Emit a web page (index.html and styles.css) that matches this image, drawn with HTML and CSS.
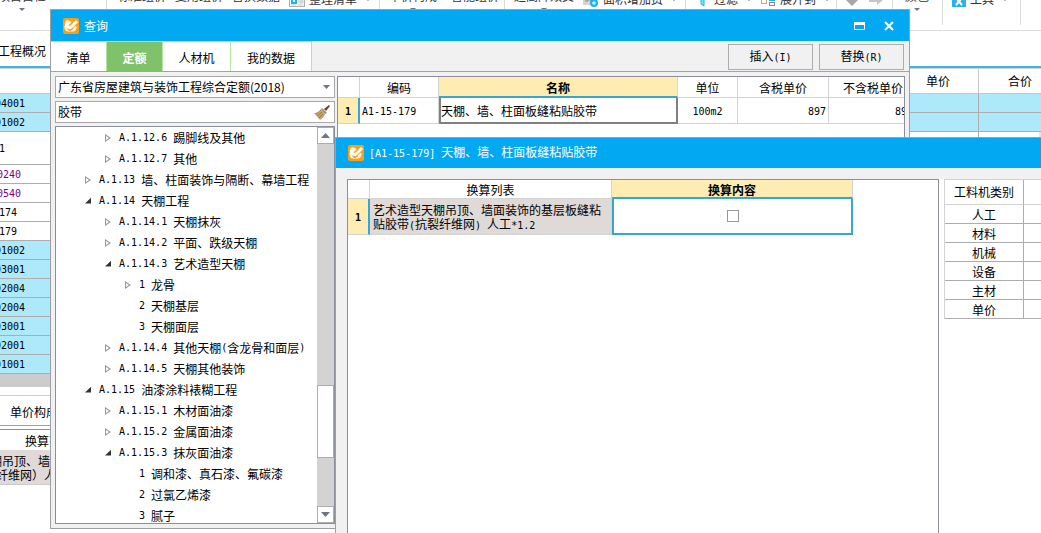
FILE: index.html
```html
<!DOCTYPE html>
<html lang="zh-CN">
<head>
<meta charset="utf-8">
<title>查询</title>
<link rel="stylesheet" href="styles.css">
</head>
<body>
<div class="desktop">
  <main class="app">
    <div class="toolbar">
      <div class="group g-project"><div class="big"><span>项目自检</span><i class="caret"></i></div></div>
      <div class="group g-pricing"><span class="cut">标准组价</span><span class="cut">复用组价</span><span class="cut">替换数据</span>
        <span class="tool"><svg width="16" height="16" viewBox="0 0 16 16"><rect x=".5" y=".5" width="15" height="15" fill="#f4f4f4" stroke="#b0b0b0"/><rect x="3" y="8" width="4" height="4" fill="#fff" stroke="#1cb4ea" stroke-width="2"/><path d="M10 7h4v5h-4zM2 14h5M9 14h5" fill="#d8d8d8" stroke="#d8d8d8"/></svg>整理清单<i class="caret"></i></span></div>
      <div class="group g-build"><div class="big"><span>单价构成</span><i class="caret"></i></div><span class="cut">智能组价</span></div>
      <div class="group g-area"><div class="big"><span>超高降效费</span><i class="caret"></i></div>
        <span class="tool"><svg width="16" height="16" viewBox="0 0 16 16"><rect width="12" height="14" fill="#d4d4d4"/><path d="M2 10h3l1-3 2 4h3" stroke="#888" fill="none"/><circle cx="11" cy="12" r="4" fill="#1cb4ea"/><path d="M9 12h4M11 10v4" stroke="#fff"/></svg>面积增加费<i class="caret"></i></span></div>
      <div class="group g-view"><span class="tool"><svg width="16" height="16" viewBox="0 0 16 16"><path d="M3 0h10l-3 7v8l-3-2V7z" fill="#7fe0fa" stroke="#1cb4ea"/></svg>过滤<i class="caret"></i></span>
        <span class="tool"><svg width="16" height="16" viewBox="0 0 16 16"><rect x="1.500" y="8.500" width="5" height="4" fill="#fff" stroke="#c4a78b"/><rect x="9.500" y="6.500" width="5" height="3" fill="#fff" stroke="#1cb4ea"/><rect x="9.500" y="11.500" width="5" height="3" fill="#fff" stroke="#888"/></svg>展开到<i class="caret"></i></span></div>
      <div class="group g-move"><span class="tool"><svg width="14" height="16" viewBox="0 0 14 16"><path d="M4 0h6v8h4l-7 7-7-7h4z" fill="#a6a6a6"/></svg></span><span class="tool"><svg width="14" height="16" viewBox="0 0 14 16"><path d="M0 7h8V3l6 6-6 5V11H0z" fill="#c6c6c6"/></svg></span></div>
      <div class="group g-color"><div class="big"><span>颜色</span><i class="caret"></i></div></div>
      <div class="group g-tools"><span class="tool"><svg width="14" height="16" viewBox="0 0 14 16"><rect width="14" height="16" fill="#2bb3e8"/><path d="M4 7l6 7M10 7l-6 7" stroke="#fff" stroke-width="2"/></svg>工具<i class="caret"></i></span></div>
    </div>
    <nav class="pages"><a href="#">工程概况</a></nav>
    <table class="bill">
      <colgroup><col class="c-code"><col><col class="c-price"><col class="c-total"><col class="c-scroll"></colgroup>
      <thead><tr><th></th><th></th><th>单价</th><th>合价</th><th></th></tr></thead>
      <tbody>
        <tr class="blue"><td>04001</td><td></td><td></td><td></td><td></td></tr>
        <tr class="blue"><td>01002</td><td></td><td></td><td></td><td></td></tr>
        <tr class="tall"><td>1</td><td></td><td></td><td></td><td></td></tr>
        <tr class="purple"><td>0240</td><td></td><td></td><td></td><td></td></tr>
        <tr class="purple"><td>0540</td><td></td><td></td><td></td><td></td></tr>
        <tr class="sub"><td>174</td><td></td><td></td><td></td><td></td></tr>
        <tr class="sub"><td>179</td><td></td><td></td><td></td><td></td></tr>
        <tr class="blue"><td>01002</td><td></td><td></td><td></td><td></td></tr>
        <tr class="blue"><td>03001</td><td></td><td></td><td></td><td></td></tr>
        <tr class="blue"><td>02004</td><td></td><td></td><td></td><td></td></tr>
        <tr class="blue"><td>02004</td><td></td><td></td><td></td><td></td></tr>
        <tr class="blue"><td>03001</td><td></td><td></td><td></td><td></td></tr>
        <tr class="blue"><td>02001</td><td></td><td></td><td></td><td></td></tr>
        <tr class="blue"><td>01001</td><td></td><td></td><td></td><td></td></tr>
      </tbody>
    </table>
    <div class="hscroll"></div>
    <nav class="detail-tabs"><a href="#">单价构成</a></nav>
    <div class="detail-head">换算列表</div>
    <div class="detail-row"><p class="first">棚吊顶、墙面装饰</p><p class="second">纤维网）人工*1.2</p></div>
  </main>

  <section class="window query">
    <header class="titlebar">
      <svg class="logo" viewBox="0 0 16 16"><rect width="16" height="16" rx="2" fill="#f9a01b"/><path d="M7 3L4 2 2 4l1 2-2 3 2 4 4 1 5-1 2-4" fill="#fff3dc"/><path d="M5 8l2 2 6-7" fill="none" stroke="#f9a01b" stroke-width="5"/><path d="M3 5l1 3 3 2 7-7" fill="none" stroke="#fff" stroke-width="3"/><path d="M5 12l5-1" stroke="#f9a01b"/></svg>
      <h1>查询</h1>
      <div class="controls">
        <button aria-label="最大化"><svg width="12" height="10" viewBox="0 0 12 10"><path d="M.5 1.500h10v7H.5z" fill="none" stroke="#fff"/><path d="M0 1h11v3H0z" fill="#fff"/></svg></button>
        <button aria-label="关闭"><svg width="12" height="10" viewBox="0 0 12 10"><path d="M2 1l8 8M10 1L2 9" stroke="#fff" stroke-width="2"/></svg></button>
      </div>
    </header>
    <div class="tabbar">
      <button class="tab">清单</button><button class="tab active">定额</button><button class="tab wide">人材机</button><button class="tab wider">我的数据</button>
      <div class="actions"><button class="btn">插入<span class="n">(I)</span></button><button class="btn">替换<span class="n">(R)</span></button></div>
    </div>
    <div class="query-body">
      <aside class="side">
        <div class="field">
          <select aria-label="定额库"><option>广东省房屋建筑与装饰工程综合定额(2018)</option></select>
          <svg class="drop" width="7" height="4" viewBox="0 0 7 4"><path d="M0 0h7L3.500 4z" fill="#6d7585"/></svg>
        </div>
        <div class="field">
          <input type="text" aria-label="搜索" value="胶带">
          <button class="broom" aria-label="清除"><svg width="16" height="15" viewBox="0 0 16 15"><path d="M10 4l5-4 1 1-4 5z" fill="#7a3d1c"/><path d="M8 3l5 5-2 1-4-5z" fill="#8b8f94"/><path d="M7 4l4 5c-1 3-3 5-5 6L0 8c3 0 6-1 7-4z" fill="#c9a468"/><path d="M8 7l-5 4M9 9l-4 4M7 5L2 9" stroke="#8f6a35" stroke-width=".7"/></svg></button>
        </div>
        <div class="tree-box">
          <ul class="tree">
            <li class="l2 closed"><span class="n">A.1.12.6 </span>踢脚线及其他</li>
            <li class="l2 closed"><span class="n">A.1.12.7 </span>其他</li>
            <li class="l1 closed"><span class="n">A.1.13 </span>墙、柱面装饰与隔断、幕墙工程</li>
            <li class="l1 open"><span class="n">A.1.14 </span>天棚工程</li>
            <li class="l2 closed"><span class="n">A.1.14.1 </span>天棚抹灰</li>
            <li class="l2 closed"><span class="n">A.1.14.2 </span>平面、跌级天棚</li>
            <li class="l2 open"><span class="n">A.1.14.3 </span>艺术造型天棚</li>
            <li class="l3 closed"><span class="n">1 </span>龙骨</li>
            <li class="l3"><span class="n">2 </span>天棚基层</li>
            <li class="l3"><span class="n">3 </span>天棚面层</li>
            <li class="l2 closed"><span class="n">A.1.14.4 </span>其他天棚<span class="n">(</span>含龙骨和面层<span class="n">)</span></li>
            <li class="l2 closed"><span class="n">A.1.14.5 </span>天棚其他装饰</li>
            <li class="l1 open"><span class="n">A.1.15 </span>油漆涂料裱糊工程</li>
            <li class="l2 closed"><span class="n">A.1.15.1 </span>木材面油漆</li>
            <li class="l2 closed"><span class="n">A.1.15.2 </span>金属面油漆</li>
            <li class="l2 open"><span class="n">A.1.15.3 </span>抹灰面油漆</li>
            <li class="l3"><span class="n">1 </span>调和漆、真石漆、氟碳漆</li>
            <li class="l3"><span class="n">2 </span>过氯乙烯漆</li>
            <li class="l3"><span class="n">3 </span>腻子</li>
          </ul>
          <div class="vscroll">
            <button aria-label="向上"><svg width="9" height="5" viewBox="0 0 9 5"><path d="M0 5h9L4.500 0z" fill="#6d7585"/></svg></button>
            <div class="track"><div class="thumb"></div></div>
            <button aria-label="向下"><svg width="9" height="5" viewBox="0 0 9 5"><path d="M0 0h9L4.500 5z" fill="#6d7585"/></svg></button>
          </div>
        </div>
      </aside>
      <div class="results">
        <table class="grid quota">
          <colgroup><col class="q-num"><col class="q-code"><col class="q-name"><col class="q-unit"><col class="q-tax"><col class="q-notax"></colgroup>
          <thead><tr><th></th><th>编码</th><th class="current">名称</th><th>单位</th><th>含税单价</th><th>不含税单价</th></tr></thead>
          <tbody><tr><td class="rownum"><b class="n">1</b></td><td class="code"><span class="n">A1-15-179</span></td><td class="picked">天棚、墙、柱面板缝粘贴胶带</td><td class="mid"><span class="n">100m2</span></td><td class="num"><span class="n">897</span></td><td class="num"><span class="n">897</span></td></tr></tbody>
        </table>
      </div>
    </div>
  </section>

  <section class="window convert">
    <header class="titlebar">
      <svg class="logo" viewBox="0 0 16 16"><rect width="16" height="16" rx="2" fill="#f9a01b"/><path d="M7 3L4 2 2 4l1 2-2 3 2 4 4 1 5-1 2-4" fill="#fff3dc"/><path d="M5 8l2 2 6-7" fill="none" stroke="#f9a01b" stroke-width="5"/><path d="M3 5l1 3 3 2 7-7" fill="none" stroke="#fff" stroke-width="3"/><path d="M5 12l5-1" stroke="#f9a01b"/></svg>
      <h1><span class="n">[A1-15-179] </span>天棚、墙、柱面板缝粘贴胶带</h1>
    </header>
    <div class="convert-body">
      <div class="list-panel">
        <table class="grid rules">
          <colgroup><col class="r-num"><col class="r-list"><col class="r-content"></colgroup>
          <thead><tr><th></th><th>换算列表</th><th class="current">换算内容</th></tr></thead>
          <tbody><tr><td class="rownum"><b class="n">1</b></td><td class="rule">艺术造型天棚吊顶、墙面装饰的基层板缝粘贴胶带<span class="n">(</span>抗裂纤维网<span class="n">) </span>人工<span class="n">*1.2</span></td><td class="check"><input type="checkbox" aria-label="换算内容"></td></tr></tbody>
        </table>
      </div>
      <div class="kinds-panel">
        <table class="kinds">
          <colgroup><col class="k-name"><col></colgroup>
          <thead><tr><th>工料机类别</th><th></th></tr></thead>
          <tbody>
            <tr><td>人工</td><td></td></tr>
            <tr><td>材料</td><td></td></tr>
            <tr><td>机械</td><td></td></tr>
            <tr><td>设备</td><td></td></tr>
            <tr><td>主材</td><td></td></tr>
            <tr><td>单价</td><td></td></tr>
          </tbody>
        </table>
      </div>
    </div>
  </section>
</div>
</body>
</html>
```
FILE: styles.css
```css
* { box-sizing: border-box; }
body { margin: 0; font: 12px/14px "Noto Sans CJK SC", sans-serif; color: #000; background: #fff; }
button, input, select { font: inherit; color: inherit; }
button { border: 0; padding: 0; background: none; }
a { color: inherit; text-decoration: none; }
p { margin: 0; }
table { border-collapse: separate; border-spacing: 0; table-layout: fixed; }
th { font-weight: normal; }
th, td { padding: 0; }
svg { display: block; flex: none; }
.n { font-family: "DejaVu Sans Mono", monospace; font-size: 10px; white-space: pre; }
.desktop { position: relative; height: 100vh; overflow: hidden; }

/* main application */
.toolbar { display: flex; height: 31px; border-bottom: 1px solid #dcdcdc; overflow: hidden; color: #333; white-space: nowrap; }
.group { display: flex; flex: none; align-items: flex-start; height: 25px; border-right: 1px solid #dcdcdc; }
.big { display: flex; flex-direction: column; align-items: center; gap: 5px; margin-top: -11px; }
.cut { margin-top: -11px; }
.tool { display: flex; align-items: center; gap: 4px; margin-top: -9px; }
.caret { border: 3px solid transparent; border-top-color: #6d7585; border-bottom: 0; }
.tool .caret { margin-left: 4px; }
.g-project { width: 107px; }
.g-project .big { margin-left: -2px; }
.g-pricing { width: 273px; padding-left: 11px; gap: 9px; }
.g-build { width: 125px; padding-left: 9px; gap: 14px; }
.g-area { width: 181px; padding-left: 9px; gap: 9px; }
.g-view { width: 151px; padding-left: 8px; gap: 8px; }
.g-move { width: 56px; padding-left: 8px; gap: 10px; }
.g-color { width: 50px; padding-left: 12px; }
.g-tools { width: 78px; padding-left: 9px; }
.pages { display: flex; align-items: center; height: 37px; padding-top: 4px; border-bottom: 2px solid #3fb5e6; }
.pages a { margin-left: -2px; }
.bill { width: 100%; border-top: 1px solid #d0d0d0; font-family: "DejaVu Sans Mono", "Noto Sans CJK SC", monospace; }
.c-code { width: 26px; }
.c-price { width: 71px; }
.c-total { width: 60px; }
.c-scroll { width: 2px; }
.bill th { height: 25px; padding-top: 2px; border-bottom: 1px solid #c8c8c8; font-size: 12px; }
.bill th:nth-child(3) { padding-right: 10px; border-right: 1px solid #c8c8c8; }
.bill th:nth-child(4) { padding-left: 22px; }
.bill td { height: 19px; padding-top: 2px; border-bottom: 1px solid #adadad; font-size: 10px; white-space: nowrap; }
.bill td:nth-child(3) { border-right: 1px solid #adadad; }
.bill td:last-child { background: #e4e4e4; }
.bill td:first-child { text-indent: -5px; }
.bill .blue td { background: #ade9fb; }
.bill .tall td { height: 33px; }
.bill .purple td { color: #800080; }
.bill .purple td:first-child { text-indent: -3px; }
.bill .sub td:first-child, .bill .tall td:first-child { text-indent: -1px; }
.hscroll { height: 13px; background: #ccc; }
.detail-tabs { display: flex; align-items: center; height: 31px; margin-top: 8px; padding: 2px 0 0 10px; border-top: 1px solid #b5e59f; border-bottom: 1px solid #80c269; }
.detail-head { height: 21px; margin-top: 3px; padding: 4px 0 0 25px; border-top: 1px solid #8a8f99; }
.detail-row { padding: 4px 0 2px; background: #dfd9d7; border-bottom: 1px solid #ccc; }
.first { text-indent: -10px; }
.second { text-indent: -4px; }

/* windows */
.window { position: absolute; display: flex; flex-direction: column; background: #f1f1f1; border: 1px solid #9da0a3; }
.query { left: 50px; top: 9px; width: 860px; height: 520px; }
.convert { left: 335px; top: 137px; right: 0; bottom: 0; border-right: 0; border-bottom: 0; }
.titlebar { display: flex; align-items: center; flex: none; height: 31px; padding: 0 12px; gap: 5px; background: #02a9f2; color: #fff; }
.logo { width: 16px; height: 16px; }
.titlebar h1 { margin: 0; font-size: 12px; font-weight: normal; }
.controls { display: flex; gap: 17px; margin-left: auto; padding-right: 2px; }
.tabbar { display: flex; flex: none; height: 31px; border-bottom: 1px solid #80c269; }
.tab { width: 56px; padding-top: 3px; background: #fff; border-top: 1px solid #b5e59f; border-right: 1px solid #b5e59f; }
.tab.active { background: #80c269; color: #fff; font-weight: bold; }
.tab.wide { width: 68px; }
.tab.wider { width: 81px; }
.actions { display: flex; gap: 6px; margin-left: auto; padding: 3px 5px 1px 0; }
.btn { width: 85px; border: 1px solid #adadad; }
.query-body { display: flex; flex: 1; gap: 2px; min-height: 0; padding: 4px; }
.side { display: flex; flex-direction: column; flex: none; width: 280px; gap: 3px; }
.field { display: flex; align-items: center; flex: none; height: 22px; background: #fff; border: 1px solid #a8a8a8; }
.field select, .field input { flex: 1; min-width: 0; border: 0; padding: 0 2px; appearance: none; background: none; outline: 0; }
.drop { margin: 0 4px; }
.broom { padding-right: 4px; }
.tree-box { display: flex; flex: 1; min-height: 0; background: #fff; border: 1px solid #8a8f99; }
.tree { flex: 1; margin: 0; overflow: hidden; padding: 0; list-style: none; white-space: nowrap; }
.tree li { display: flex; align-items: center; height: 21px; padding-top: 1px; }
.tree li::before { content: ""; width: 6px; height: 8px; margin-right: 8px; }
.tree .closed::before { background: #999; clip-path: path(evenodd, "M0 0L6 4L0 8zM1 2L4 4L1 6z"); }
.tree .open::before { background: #333; clip-path: polygon(100% 10%, 100% 80%, 0 80%); }
.l1 { padding-left: 29px; }
.l2 { padding-left: 49px; }
.l3 { padding-left: 69px; }
.vscroll { display: flex; flex-direction: column; width: 17px; background: #d3d3d3; }
.vscroll button { display: flex; align-items: center; justify-content: center; height: 17px; background: #fff; border: 1px solid #adadad; }
.track { display: flex; flex-direction: column; justify-content: flex-end; flex: 1; padding-bottom: 48px; }
.thumb { height: 73px; background: #fff; border: 1px solid #adadad; }
.results { flex: 1; min-width: 0; overflow: hidden; background: #fff; border: 1px solid #8a8f99; }

/* grids */
.grid th, .grid td { border-right: 1px solid #d3d3d3; border-bottom: 1px solid #d3d3d3; }
.grid th { padding-top: 2px; }
.grid .current { background: #feecb3; font-weight: bold; border-bottom: 2px solid #38a6d2; }
.grid .rownum { background: #feecb3; border-right: 2px solid #38a6d2; text-align: center; }
.quota { width: 580px; }
.q-num { width: 22px; }
.q-code { width: 79px; }
.q-name { width: 239px; }
.q-unit { width: 60px; }
.q-tax { width: 91px; }
.quota th { height: 21px; }
.quota td { height: 26px; }
.quota .code { padding-left: 2px; }
.quota .picked { padding-top: 2px; border: 2px solid #808080; border-top: 0; white-space: nowrap; }
.quota .mid { text-align: center; }
.quota .num { padding-right: 2px; text-align: right; }
.quota th:last-child { white-space: nowrap; }
.quota td:last-child { padding-right: 4px; }
.convert-body { display: flex; flex: 1; min-height: 0; padding: 11px 0 0 11px; }
.convert .titlebar { height: 30px; }
.list-panel { flex: 1; min-width: 0; background: #fff; border: 1px solid #8a8f99; border-bottom: 0; }
.rules { width: 505px; }
.r-num { width: 22px; }
.r-list { width: 242px; }
.rules th { height: 19px; }
.rules td { height: 36px; }
.rules .rule { padding: 2px 8px 0 3px; background: #dfd9d7; }
.rules .check { border: 2px solid #38a6d2; border-top: 0; text-align: center; }
.check input { appearance: none; display: block; width: 12px; height: 12px; margin: 0 auto; border: 1px solid #999; background: #fff; }
.kinds-panel { flex: none; width: 102px; padding-left: 5px; background: #fff; }
.kinds { width: 97px; border-top: 1px solid #d3d3d3; border-left: 1px solid #d3d3d3; }
.k-name { width: 79px; }
.kinds th { height: 25px; border-bottom: 1px solid #d3d3d3; white-space: nowrap; }
.kinds td { height: 19px; padding-top: 2px; border-bottom: 1px solid #adadad; text-align: center; }
.kinds th:first-child, .kinds td:first-child { border-right: 1px solid #adadad; }
```
